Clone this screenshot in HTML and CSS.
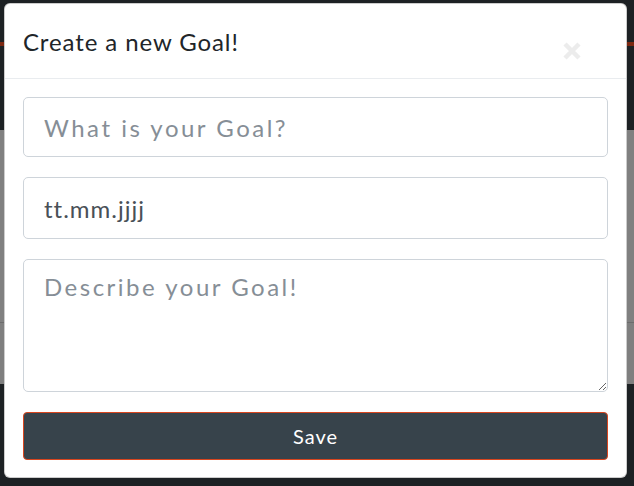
FILE: index.html
```html
<!DOCTYPE html>
<html lang="de">
<head>
<meta charset="utf-8">
<title>Create a new Goal</title>
<link rel="stylesheet" href="styles.css">
</head>
<body>
<div class="page">
  <div class="nav"></div>
  <div class="nav-line"></div>
  <div class="band-dark"></div>
  <div class="band-gray"></div>
  <div class="band-rule"></div>
  <div class="band-gray2"></div>
  <div class="band-dark2"></div>
</div>
<div class="modal">
  <div class="modal-header">
    <h5 class="modal-title">Create a new Goal!</h5>
    <button class="close" type="button" aria-label="Close">
      <svg width="20" height="20" viewBox="0 0 20 20"><path d="M3 3 L17 17 M17 3 L3 17" stroke="#ececec" stroke-width="4.5" stroke-linecap="butt"/></svg>
    </button>
  </div>
  <form class="modal-body">
    <input class="field" type="text" placeholder="What is your Goal?">
    <input class="field field-date" type="text" value="tt.mm.jjjj">
    <textarea class="field field-area" placeholder="Describe your Goal!"></textarea>
    <button class="save" type="button">Save</button>
  </form>
</div>
</body>
</html>
```
FILE: styles.css
```css
html, body {
  margin: 0;
  padding: 0;
}
body {
  width: 634px;
  height: 486px;
  overflow: hidden;
  background: #1d2124;
  font-family: Lato, "Open Sans", sans-serif;
  position: relative;
}
.page {
  display: flex;
  flex-direction: column;
}
.nav { height: 42px; background: #1d2124; }
.nav-line { height: 4px; background: #7d2812; }
.band-dark { height: 84px; background: #1d2124; }
.band-gray { height: 192px; background: #808080; }
.band-rule { height: 1px; background: #6c6c6c; }
.band-gray2 { height: 61px; background: #7f7f7f; }
.band-dark2 { height: 102px; background: #1d2124; }

.modal {
  position: absolute;
  left: 4px;
  top: 3px;
  width: 623px;
  height: 475px;
  box-sizing: border-box;
  background: #fff;
  border: 1px solid rgba(0,0,0,.2);
  border-radius: 6px;
  display: flex;
  flex-direction: column;
}
.modal-header {
  height: 75px;
  box-sizing: border-box;
  border-bottom: 1px solid #e9ecef;
  padding: 0 18px;
  display: flex;
  align-items: center;
}
.modal-title {
  margin: 0;
  font-size: 24px;
  font-weight: 400;
  letter-spacing: 0.9px;
  color: #212529;
  flex: 1;
}
.close {
  align-self: flex-end;
  margin: 0 26px 17px 0;
  padding: 0;
  border: 0;
  background: transparent;
  width: 20px;
  height: 20px;
  display: flex;
}
.modal-body {
  margin: 0;
  padding: 18px 18px 17px;
  display: flex;
  flex-direction: column;
  gap: 20px;
}
.field {
  display: block;
  box-sizing: border-box;
  width: 100%;
  height: 60px;
  margin: 0;
  padding: 0 20px;
  border: 1px solid #ced4da;
  border-radius: 5px;
  font-family: Lato, "Open Sans", sans-serif;
  font-size: 24px;
  letter-spacing: 1px;
  color: #495057;
  background: #fff;
  outline: none;
}
.field::placeholder {
  color: #868e96;
  opacity: 1;
  letter-spacing: 2.5px;
}
.field-date { height: 62px; }
.field-area {
  height: 133px;
  padding-top: 12px;
  resize: vertical;
}
.save {
  height: 48px;
  width: 100%;
  border: 1px solid #d9461f;
  border-radius: 4px;
  background: #37434b;
  color: #fff;
  font-family: Lato, "Open Sans", sans-serif;
  font-size: 20px;
  letter-spacing: 1px;
  padding: 0;
}
```
